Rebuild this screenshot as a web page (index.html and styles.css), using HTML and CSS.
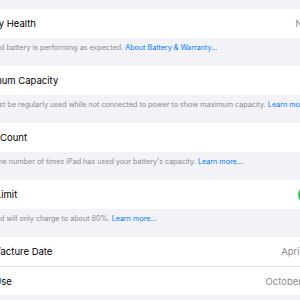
FILE: index.html
```html
<!DOCTYPE html>
<html>
<head>
  <title>Battery Health</title>
  <link rel="stylesheet" href="styles.css">
</head>
<body>
  <div class="page">
    <div class="group">
      <div class="row">
        <span class="title">Battery Health</span>
        <span class="value">Normal</span>
      </div>
    </div>
    <p class="footer">Your iPad battery is performing as expected. <a href="#">About Battery &amp; Warranty...</a></p>

    <div class="group">
      <div class="row">
        <span class="title">Maximum Capacity</span>
        <span class="value">100%</span>
      </div>
    </div>
    <p class="footer">iPad must be regularly used while not connected to power to show maximum capacity. <a href="#">Learn more...</a></p>

    <div class="group">
      <div class="row">
        <span class="title">Cycle Count</span>
        <span class="value">210</span>
      </div>
    </div>
    <p class="footer">This is the number of times iPad has used your battery's capacity. <a href="#">Learn more...</a></p>

    <div class="group">
      <div class="row">
        <span class="title">80% Limit</span>
        <span class="toggle on"><span class="knob"></span></span>
      </div>
    </div>
    <p class="footer">Your iPad will only charge to about 80%. <a href="#">Learn more...</a></p>

    <div class="group">
      <div class="row">
        <span class="title">Manufacture Date</span>
        <span class="value">April 2022</span>
      </div>
      <div class="row">
        <span class="title">First Use</span>
        <span class="value">October 2022</span>
      </div>
    </div>
  </div>
</body>
</html>
```

FILE: styles.css
```css
html, body {
  margin: 0;
  background-color: #f2f2f7;
  overflow: hidden;
}
body {
  font-family: Inter, "Liberation Sans", sans-serif;
  -webkit-font-smoothing: antialiased;
}
.page {
  margin-left: -44px;
  width: 388px;
  padding-top: 9px;
}
.group {
  background-color: #fff;
}
.row {
  display: flex;
  align-items: center;
  justify-content: space-between;
  height: 29px;
  padding: 0 16px;
  position: relative;
}
.row + .row {
  border-top: 1px solid #e0e0e4;
  height: 28px;
}
.title {
  font-size: 9.5px;
  color: #000;
}
.value {
  font-size: 9.5px;
  color: #8a8a8e;
}
.footer {
  margin: 0;
  height: 28px;
  box-sizing: border-box;
  padding: 5px 16px 0;
  font-size: 7.2px;
  line-height: 9px;
  color: #8a8a8e;
  white-space: nowrap;
}
.footer a {
  color: #007aff;
  text-decoration: none;
}
.toggle {
  width: 30px;
  height: 18px;
  border-radius: 9px;
  background-color: #e5e5ea;
  position: relative;
}
.toggle.on {
  background-color: #34c759;
}
.toggle .knob {
  position: absolute;
  top: 1.5px;
  right: 1.5px;
  width: 15px;
  height: 15px;
  border-radius: 50%;
  background-color: #fff;
}
```
